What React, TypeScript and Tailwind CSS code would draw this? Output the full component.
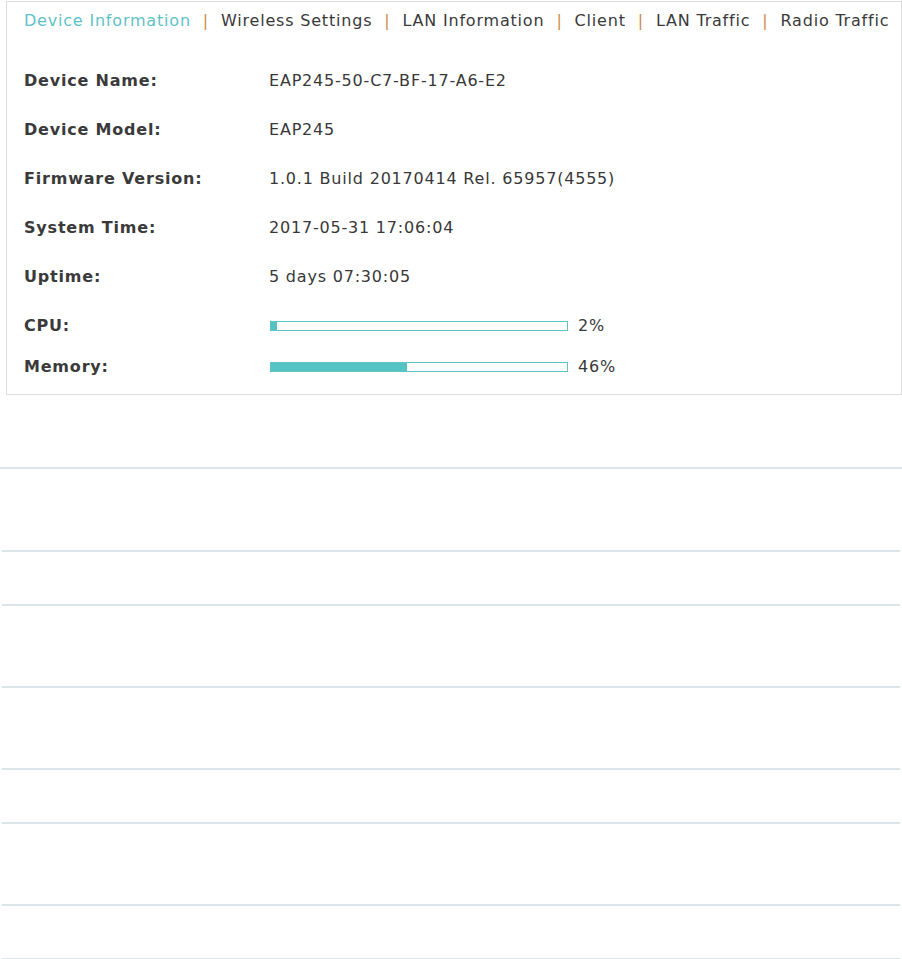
import { Fragment } from "react";

const tabs = ["Device Information", "Wireless Settings", "LAN Information", "Client", "LAN Traffic", "Radio Traffic"];

const info = [
  { label: "Device Name:", value: "EAP245-50-C7-BF-17-A6-E2" },
  { label: "Device Model:", value: "EAP245" },
  { label: "Firmware Version:", value: "1.0.1 Build 20170414 Rel. 65957(4555)" },
  { label: "System Time:", value: "2017-05-31 17:06:04" },
  { label: "Uptime:", value: "5 days 07:30:05" },
];

// heights include the 2px bottom border
const rowHeights = ["h-[83px]", "h-[54px]", "h-[82px]", "h-[82px]", "h-[54px]", "h-[82px]", "h-[54px]"];

function Usage({ percent }: { percent: number }) {
  return (
    <div className="flex items-center">
      <div className="h-[10px] w-[298px] border border-[#5cc5c6] bg-white">
        <div className="h-full bg-[#55c3c4]" style={{ width: `${percent}%` }} />
      </div>
      <span className="ml-[10px]">{percent}%</span>
    </div>
  );
}

export default function App() {
  return (
    <main className="min-h-screen bg-white font-['DejaVu_Sans',sans-serif] text-[16px] tracking-[0.8px] text-[#383838]">
      <section className="ml-[6px] mt-px w-[896px] border border-[#dddddd] pb-[10px] pl-[17px]">
        <nav className="flex h-[38px] items-center whitespace-nowrap">
          {tabs.map((tab, i) => (
            <Fragment key={tab}>
              {i > 0 && <span className="mx-[12px] text-[#c98c4a]">|</span>}
              <span className={i === 0 ? "text-[#5ec3c7]" : "text-[#3a3a3a]"}>{tab}</span>
            </Fragment>
          ))}
        </nav>

        <div className="mt-[16px]">
          {info.map((row) => (
            <div key={row.label} className="flex h-[49px] items-center">
              <div className="w-[245px] font-bold text-[#3a3a3a]">{row.label}</div>
              <div>{row.value}</div>
            </div>
          ))}
          <div className="flex h-[49px] items-center">
            <div className="w-[246px] font-bold text-[#3a3a3a]">CPU:</div>
            <Usage percent={2} />
          </div>
          <div className="flex h-[34px] items-center">
            <div className="w-[246px] font-bold text-[#3a3a3a]">Memory:</div>
            <Usage percent={46} />
          </div>
        </div>
      </section>

      <div className="mt-[72px] h-[2px] bg-[#dce6e8]" />
      <div className="px-[2px]">
        {rowHeights.map((h, i) => (
          <div key={i} className={`${h} border-b-2 border-[#dce6e8]`} />
        ))}
      </div>
    </main>
  );
}
